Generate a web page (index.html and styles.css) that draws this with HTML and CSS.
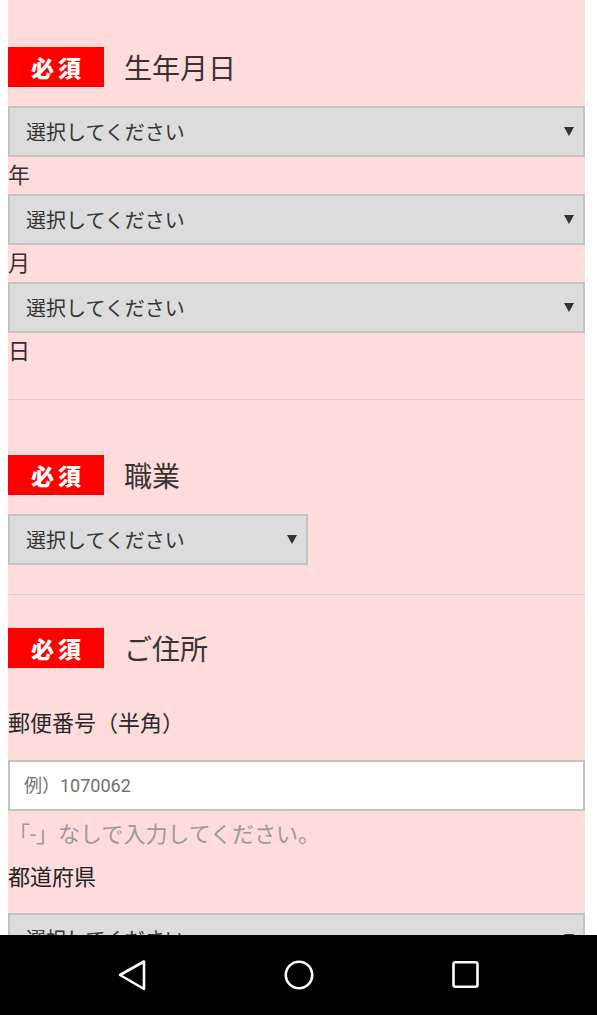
FILE: index.html
```html
<!DOCTYPE html>
<html lang="ja">
<head>
<meta charset="utf-8">
<title>フォーム</title>
<link rel="stylesheet" href="styles.css">
</head>
<body>
<div class="screen">
  <main class="viewport">
    <div class="page">
      <section class="field field-birth">
        <div class="field-head"><span class="badge">必須</span><h2 class="field-title">生年月日</h2></div>
        <div class="select select-full"><span>選択してください</span><i class="arrow"></i></div>
        <p class="unit">年</p>
        <div class="select select-full"><span>選択してください</span><i class="arrow"></i></div>
        <p class="unit">月</p>
        <div class="select select-full"><span>選択してください</span><i class="arrow"></i></div>
        <p class="unit">日</p>
      </section>
      <section class="field field-job">
        <div class="field-head"><span class="badge">必須</span><h2 class="field-title">職業</h2></div>
        <div class="select select-short"><span>選択してください</span><i class="arrow"></i></div>
      </section>
      <section class="field field-address">
        <div class="field-head"><span class="badge">必須</span><h2 class="field-title">ご住所</h2></div>
        <p class="sub-label zip-label">郵便番号（半角）</p>
        <input class="text-input" type="text" placeholder="例）1070062">
        <p class="help">「-」なしで入力してください。</p>
        <p class="sub-label pref-label">都道府県</p>
        <div class="select select-full pref-select"><span>選択してください</span><i class="arrow"></i></div>
      </section>
    </div>
  </main>
  <nav class="navbar">
    <svg class="nav-icon" width="30" height="32" viewBox="0 0 30 32"><polygon points="3,16 27,2.5 27,30" fill="none" stroke="#fff" stroke-width="2.6" stroke-linejoin="round"/></svg>
    <svg class="nav-icon" width="30" height="32" viewBox="0 0 30 32"><circle cx="15" cy="16" r="13.2" fill="none" stroke="#fff" stroke-width="2.6"/></svg>
    <svg class="nav-icon" width="30" height="32" viewBox="0 0 30 32"><rect x="2.5" y="3.3" width="24" height="24.5" rx="2" fill="none" stroke="#fff" stroke-width="2.6"/></svg>
  </nav>
</div>
</body>
</html>
```

FILE: styles.css
```css
* { box-sizing: border-box; }

html, body {
  margin: 0;
  padding: 0;
  background: #ffffff;
}

body {
  font-family: Roboto, "Noto Sans CJK JP", sans-serif;
  color: #333333;
}

.screen {
  width: 597px;
  height: 1015px;
  display: flex;
  flex-direction: column;
  overflow: hidden;
}

.viewport {
  flex: 1;
  overflow: hidden;
  padding-left: 8px;
}

.page {
  width: 577px;
  background: #ffdcdc;
}

.field {
  display: flex;
  flex-direction: column;
  align-items: flex-start;
}

.field-birth {
  padding-top: 47px;
  padding-bottom: 29px;
  border-bottom: 1px solid #d8cccc;
}

.field-job {
  padding-top: 55px;
  padding-bottom: 29px;
  border-bottom: 1px solid #d2d6da;
}

.field-address {
  padding-top: 33px;
}

.field-head {
  display: flex;
  align-items: flex-start;
  gap: 20px;
  height: 40px;
  margin-bottom: 19px;
}

.badge {
  width: 96px;
  height: 40px;
  background: #ff0000;
  color: #ffffff;
  font-weight: 900;
  font-size: 23px;
  letter-spacing: 4px;
  padding-left: 4px;
  display: flex;
  align-items: center;
  justify-content: center;
}

.field-title {
  margin: 3px 0 0 0;
  font-size: 28px;
  font-weight: 400;
  color: #3a3232;
  line-height: 40px;
}

.select {
  height: 51px;
  border: 2px solid #c3c3c3;
  background: #dcdcdc;
  display: flex;
  align-items: center;
  padding-left: 16px;
  padding-right: 9px;
  font-size: 20px;
  color: #333333;
}

.select-full { width: 577px; }
.select-short { width: 300px; }

.arrow {
  margin-left: auto;
  width: 0;
  height: 0;
  border-left: 5px solid transparent;
  border-right: 5px solid transparent;
  border-top: 9px solid #333333;
}

.unit {
  margin: 0;
  font-size: 22px;
  line-height: 37px;
  color: #333333;
}

.sub-label {
  margin: 0;
  font-size: 22px;
  line-height: 36px;
  color: #2a2a2a;
}

.zip-label {
  margin-top: 17px;
  line-height: 40px;
}

.text-input {
  margin-top: 16px;
  width: 577px;
  height: 51px;
  border: 2px solid #c3c3c3;
  background: #ffffff;
  padding: 0 0 0 14px;
  font-family: Roboto, "Noto Sans CJK JP", sans-serif;
  font-size: 18px;
  color: #333333;
  outline: none;
}

.text-input::placeholder {
  color: #707070;
}

.help {
  margin: 6px 0 0 0;
  font-size: 22px;
  line-height: 36px;
  color: #9a9a9a;
}

.pref-label {
  margin-top: 7px;
  color: #222222;
}

.pref-select {
  margin-top: 17px;
}

.navbar {
  height: 80px;
  flex: none;
  background: #000000;
  display: flex;
  align-items: center;
  justify-content: center;
  gap: 137px;
}

.nav-icon {
  display: block;
}
```
